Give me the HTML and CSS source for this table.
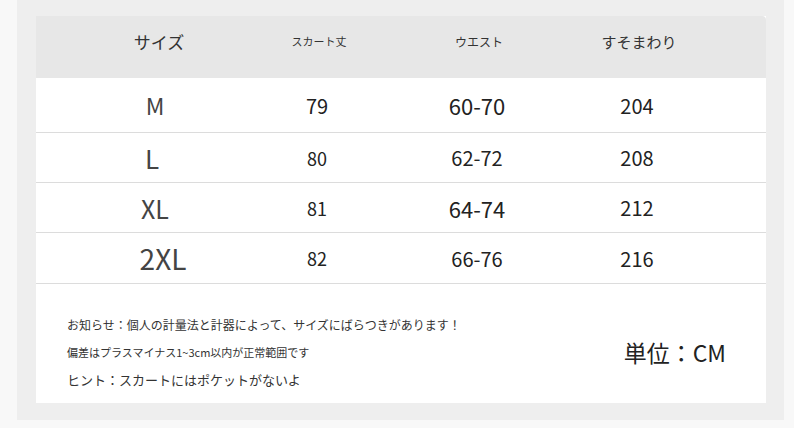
FILE: index.html
```html
<!DOCTYPE html>
<html lang="ja">
<head>
<meta charset="utf-8">
<link rel="stylesheet" href="styles.css">
</head>
<body>
<div class="frame">
  <div class="card">
    <div class="row head">
      <div class="c h1">サイズ</div>
      <div class="c h2">スカート丈</div>
      <div class="c h3">ウエスト</div>
      <div class="c h4">すそまわり</div>
    </div>
    <div class="row r1">
      <div class="c s1">M</div>
      <div class="c v">79</div>
      <div class="c v big">60-70</div>
      <div class="c v">204</div>
    </div>
    <div class="row r2">
      <div class="c s2">L</div>
      <div class="c v small">80</div>
      <div class="c v">62-72</div>
      <div class="c v">208</div>
    </div>
    <div class="row r3">
      <div class="c s3">XL</div>
      <div class="c v small">81</div>
      <div class="c v big">64-74</div>
      <div class="c v">212</div>
    </div>
    <div class="row r4">
      <div class="c s4">2XL</div>
      <div class="c v small">82</div>
      <div class="c v">66-76</div>
      <div class="c v">216</div>
    </div>
    <div class="foot">
      <div class="notes">
        <p class="n1">お知らせ：個人の計量法と計器によって、サイズにばらつきがあります！</p>
        <p class="n2">偏差はプラスマイナス1~3cm以内が正常範囲です</p>
        <p class="n3">ヒント：スカートにはポケットがないよ</p>
      </div>
      <div class="unit">単位：CM</div>
    </div>
  </div>
</div>
</body>
</html>
```

FILE: styles.css
```css
html, body {
  margin: 0;
  padding: 0;
}
body {
  background: #f8f8f8;
  font-family: "Noto Sans CJK JP", "Noto Sans", sans-serif;
  color: #333;
  width: 794px;
  height: 428px;
  overflow: hidden;
}
.frame {
  margin-left: 17px;
  width: 730px;
  padding: 16px 18px 17px 19px;
  background: #eeeeee;
}
.card {
  background: #fff;
  width: 730px;
  height: 387px;
  display: flex;
  flex-direction: column;
}
.row {
  display: grid;
  grid-template-columns: 160px 160px 160px 160px;
  padding-left: 43px;
  align-items: center;
  border-bottom: 1px solid #dcdcdc;
}
.head {
  height: 62px;
  background: #e7e7e7;
  border-bottom: none;
  border-top-right-radius: 4px;
  color: #333;
}
.c {
  text-align: center;
  white-space: nowrap;
}
.h1 { font-size: 17px; padding-bottom: 12px; }
.h2 { font-size: 11px; padding-bottom: 12px; }
.h3 { font-size: 12px; padding-bottom: 12px; }
.h4 { font-size: 15px; padding-bottom: 12px; }
.r1 { height: 54px; }
.r2 { height: 49px; }
.r3 { height: 49px; }
.r4 { height: 50px; }
.s1, .s2, .s3, .s4 { color: #444; }
.s1 { font-size: 23px; padding-right: 8px; }
.s2 { font-size: 26px; padding-right: 14px; }
.s3 { font-size: 25px; padding-right: 8px; }
.s4 { font-size: 28px; padding-left: 8px; }
.v { font-size: 20px; padding-right: 4px; color: #222; }
.big { font-size: 22px; }
.small { font-size: 18px; }
.foot {
  flex: 1;
  display: flex;
  align-items: center;
  justify-content: space-between;
  padding: 0 40px 0 31px;
}
.notes {
  padding-top: 16px;
}
.notes p {
  margin: 0;
  color: #333;
}
.n1 { font-size: 12px; line-height: 28px; }
.n2 { font-size: 11px; line-height: 27px; }
.n3 { font-size: 13px; line-height: 27px; }
.unit {
  font-size: 23px;
  color: #222;
  padding-top: 16px;
}
```
